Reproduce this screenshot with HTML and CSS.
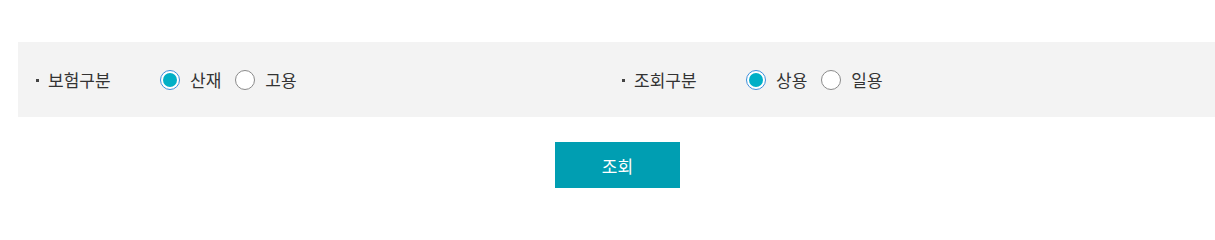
FILE: index.html
```html
<!DOCTYPE html>
<html lang="ko">
<head>
<meta charset="utf-8">
<link rel="stylesheet" href="styles.css">
</head>
<body>
<div class="wrap">
  <div class="search-box">
    <div class="field">
      <span class="label">보험구분</span>
      <label class="radio"><span class="dot checked"></span><span class="txt">산재</span></label>
      <label class="radio"><span class="dot"></span><span class="txt">고용</span></label>
    </div>
    <div class="field">
      <span class="label">조회구분</span>
      <label class="radio"><span class="dot checked"></span><span class="txt">상용</span></label>
      <label class="radio"><span class="dot"></span><span class="txt">일용</span></label>
    </div>
  </div>
  <div class="actions">
    <button class="btn">조회</button>
  </div>
</div>
</body>
</html>
```
FILE: styles.css
```css
html, body {
  margin: 0;
  padding: 0;
  background: #fff;
  overflow: hidden;
}
body {
  font-family: "Noto Sans CJK KR", "Noto Sans", sans-serif;
  color: #333;
  font-size: 17px;
}
.wrap {
  margin-left: 18px;
  width: 1199px;
  padding-top: 42px;
}
.search-box {
  background: #f3f3f3;
  height: 75px;
  display: grid;
  grid-template-columns: 586px 1fr;
  align-items: center;
}
.field {
  display: flex;
  align-items: center;
  padding-left: 18px;
}
.label {
  width: 124px;
  display: flex;
  align-items: center;
  line-height: 20px;
}
.label::before {
  content: "";
  width: 3px;
  height: 3px;
  background: #444;
  margin-right: 9px;
  margin-top: 2px;
}
.radio {
  display: flex;
  align-items: center;
  margin-right: 14px;
  line-height: 20px;
}
.dot {
  box-sizing: border-box;
  width: 20px;
  height: 20px;
  border-radius: 50%;
  border: 1px solid #8a8a8a;
  background: #fff;
  margin-right: 10px;
  position: relative;
}
.dot.checked {
  border-color: #3d8fdc;
}
.dot.checked::after {
  content: "";
  position: absolute;
  left: 2px;
  top: 2px;
  width: 14px;
  height: 14px;
  border-radius: 50%;
  background: #00afc6;
}
.actions {
  display: flex;
  justify-content: center;
  margin-top: 25px;
}
.btn {
  width: 125px;
  height: 46px;
  border: 0;
  background: #009eb2;
  color: #fff;
  font-family: "Noto Sans CJK KR", "Noto Sans", sans-serif;
  font-size: 17px;
  padding: 0;
  cursor: pointer;
}
```
